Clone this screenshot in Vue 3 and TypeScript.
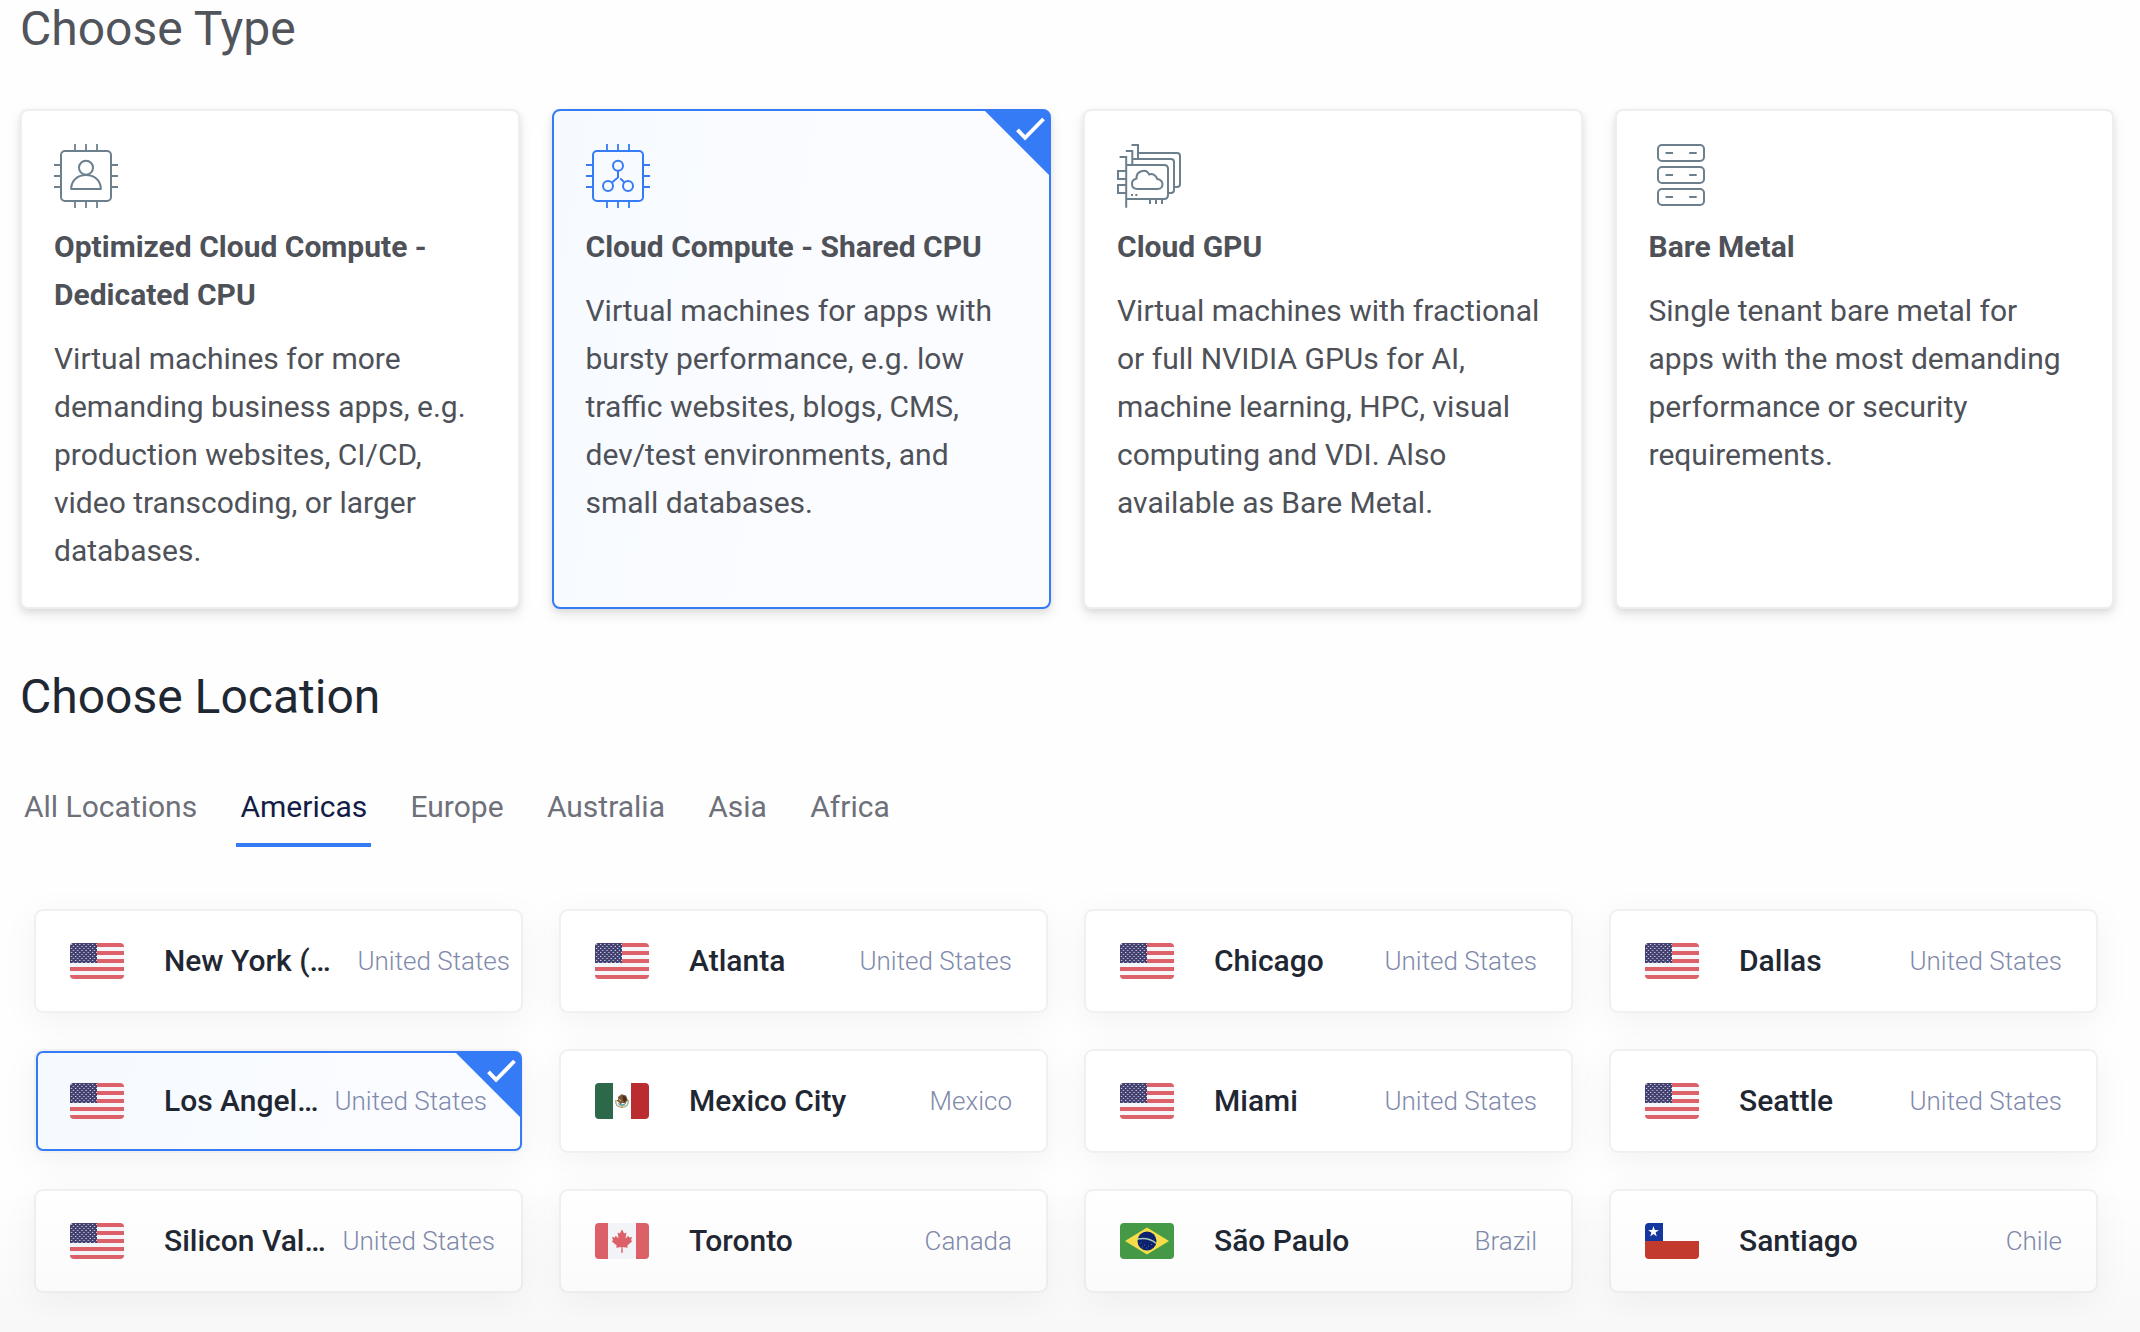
<script setup lang="ts">
import { ref } from 'vue'

interface ServerType {
  id: string
  title: string
  text: string
}

interface Place {
  name: string
  country: string
  flag: 'us' | 'mx' | 'ca' | 'br' | 'cl'
  shift?: number
}

const types: ServerType[] = [
  { id: 'dedicated', title: 'Optimized Cloud Compute - Dedicated CPU', text: 'Virtual machines for more demanding business apps, e.g. production websites, CI/CD, video transcoding, or larger databases.' },
  { id: 'shared', title: 'Cloud Compute - Shared CPU', text: 'Virtual machines for apps with bursty performance, e.g. low traffic websites, blogs, CMS, dev/test environments, and small databases.' },
  { id: 'gpu', title: 'Cloud GPU', text: 'Virtual machines with fractional or full NVIDIA GPUs for AI, machine learning, HPC, visual computing and VDI. Also available as Bare Metal.' },
  { id: 'metal', title: 'Bare Metal', text: 'Single tenant bare metal for apps with the most demanding performance or security requirements.' },
]

const tabs: string[] = ['All Locations', 'Americas', 'Europe', 'Australia', 'Asia', 'Africa']

const places: Place[] = [
  { name: 'New York (…', country: 'United States', flag: 'us', shift: 23 },
  { name: 'Atlanta', country: 'United States', flag: 'us' },
  { name: 'Chicago', country: 'United States', flag: 'us' },
  { name: 'Dallas', country: 'United States', flag: 'us' },
  { name: 'Los Angel…', country: 'United States', flag: 'us' },
  { name: 'Mexico City', country: 'Mexico', flag: 'mx' },
  { name: 'Miami', country: 'United States', flag: 'us' },
  { name: 'Seattle', country: 'United States', flag: 'us' },
  { name: 'Silicon Val…', country: 'United States', flag: 'us', shift: 8 },
  { name: 'Toronto', country: 'Canada', flag: 'ca' },
  { name: 'São Paulo', country: 'Brazil', flag: 'br' },
  { name: 'Santiago', country: 'Chile', flag: 'cl' },
]

const activeType = ref('shared')
const activeTab = ref('Americas')
const activePlace = ref('Los Angel…')
</script>

<template>
  <main class="page">
    <svg class="defs" width="0" height="0" aria-hidden="true">
      <defs>
        <pattern id="stars" width="4.2" height="4" patternUnits="userSpaceOnUse">
          <rect x="0.9" y="0.9" width="1.1" height="1.1" fill="#e4e4ee" />
          <rect x="3" y="2.9" width="1.1" height="1.1" fill="#e4e4ee" />
        </pattern>
      </defs>
    </svg>

    <h2 class="heading muted">Choose Type</h2>
    <section class="types">
      <article
        v-for="t in types"
        :key="t.id"
        class="type"
        :class="{ selected: t.id === activeType }"
        @click="activeType = t.id"
      >
        <svg class="icon" viewBox="0 0 64 64" fill="none" stroke="currentColor" stroke-width="2">
          <template v-if="t.id === 'dedicated' || t.id === 'shared'">
            <rect x="7" y="7" width="50" height="50" rx="4" />
            <path stroke-width="1.8" d="M21 0v6M32 0v6M43 0v6M21 58v6M32 58v6M43 58v6M0 21h6M0 32h6M0 43h6M58 21h6M58 32h6M58 43h6" />
          </template>
          <template v-if="t.id === 'dedicated'">
            <circle cx="32" cy="23.7" r="7" />
            <path stroke-linejoin="round" d="M17.2 45v-1.2C17.8 36 24 31 32 31s14.2 5 14.8 12.8V45z" />
          </template>
          <template v-else-if="t.id === 'shared'">
            <circle cx="32" cy="21.7" r="5" />
            <circle cx="22" cy="42" r="5" />
            <circle cx="42" cy="42" r="5" />
            <path d="M32 27v6.4l-6 5M34.3 34.4l4 3.8" />
          </template>
          <template v-else-if="t.id === 'gpu'">
            <path d="M14.5 1h6.5v13.5M21 9h39q3 0 3 3v28q0 3-3 3h-2.500M8.800 7h6.500v14M15.300 15H54q3 0 3 3v28q0 3-3 3h-2.200" />
            <path d="M2.600 13h6.600v50.700M9.200 21H47q4 0 4 4v26q0 4-4 4H9.200M9 27H1v8h8M9 41H1v8h8M33 55v5M39 55v5M45 55v5M14 51h2M18.300 51h2" />
            <path stroke-linejoin="round" d="M20.500 45C13.300 45 13.300 36 19.600 34.600C18.800 27 29 23.800 32.200 30.500C35.500 29.300 39.200 31 40.200 35C47.300 36.300 47 45 40.500 45Z" />
          </template>
          <template v-else>
            <rect v-for="y in [1, 23, 45]" :key="y" x="9" :y="y" width="46" height="16" rx="4" />
            <path d="M16.500 9h7.500M40.200 9h7.500M16.500 31h7.500M40.200 31h7.500M16.500 53h7.500M40.200 53h7.500" />
          </template>
        </svg>
        <h3>{{ t.title }}</h3>
        <p>{{ t.text }}</p>
        <svg v-if="t.id === activeType" class="corner" viewBox="0 0 66 66">
          <path d="M0 0H66V66z" fill="#367bf6" />
          <path d="M33.500 19.800l7.600 8L59.500 9" fill="none" stroke="#fff" stroke-width="3.900" />
        </svg>
      </article>
    </section>

    <h2 class="heading dark">Choose Location</h2>
    <nav class="tabs">
      <button
        v-for="tab in tabs"
        :key="tab"
        class="tab"
        :class="{ active: tab === activeTab }"
        @click="activeTab = tab"
      >{{ tab }}</button>
    </nav>

    <section class="places">
      <article
        v-for="p in places"
        :key="p.name"
        class="place"
        :class="{ selected: p.name === activePlace }"
        @click="activePlace = p.name"
      >
        <svg class="flag" viewBox="0 0 54 36">
          <template v-if="p.flag === 'us'">
            <rect width="54" height="36" fill="#f5f6fa" />
            <path d="M0 0h54v4H0zM0 8h54v4H0zM0 16h54v4H0zM0 24h54v4H0zM0 32h54v4H0z" fill="#dd6168" />
            <rect width="27" height="20" fill="#403e6e" />
            <rect width="27" height="20" fill="url(#stars)" />
          </template>
          <template v-else-if="p.flag === 'mx'">
            <rect width="54" height="36" fill="#fff" />
            <rect width="18" height="36" fill="#2c694a" />
            <rect x="36" width="18" height="36" fill="#bb2c30" />
            <path d="M20.800 17q-.8 7 6.200 7.400q7-.4 6.200-7.400" fill="none" stroke="#a9ab83" stroke-width="1.400" />
            <path d="M22.500 19.500q4.500 3 9 0l-2 3.200h-5z" fill="#5fa9b4" />
            <path d="M23 14l3.500-2.800 4.500 1.300 1.800 4.500-2.600 3.500-2.700-.8-2 1.500-2-2.200-2-1.500 1.800-1z" fill="#7b5637" />
            <path d="M27.500 12.500l3.500 1.500.5 3.500-2.500 1.500-1-2.500z" fill="#49311f" />
            <path d="M23.500 15.500l2.800 1.500-1 2.300zM26.300 22.300h1.500v2.400h-1.500z" fill="#c79a55" />
          </template>
          <template v-else-if="p.flag === 'ca'">
            <rect width="54" height="36" fill="#f5f6fa" />
            <path d="M0 0h13v36H0zM41 0h13v36H41z" fill="#dd6168" />
            <path d="M27 6.600l2.200 4 2.200-1-.9 6 2.800-2.800.8 1.700 2.900-.5-1 3.300 1.300 1-5 4.200.5 2.300-5.200-.7.200 5.600h-1.600l.2-5.600-5.200.7.500-2.300-5-4.200 1.300-1-1-3.300 2.900.5.800-1.700 2.800 2.800-.9-6 2.200 1z" fill="#dd6168" />
          </template>
          <template v-else-if="p.flag === 'br'">
            <rect width="54" height="36" fill="#469b47" />
            <path d="M5 18L27 4.500 49 18 27 31.500z" fill="#f9df4b" />
            <circle cx="27" cy="18" r="9.500" fill="#0c226f" />
            <path d="M17.700 16q11-2 18.300 4.300" fill="none" stroke="#a9cfbd" stroke-width="1.500" />
            <path d="M20.500 20h1M24 22h1M28 23h1M31 21.500h1M26 25h1M22 24h1" stroke="#6c7ba8" stroke-width=".8" />
          </template>
          <template v-else>
            <rect width="54" height="36" fill="#fff" />
            <rect width="18" height="18" fill="#1436a0" />
            <rect y="18" width="54" height="18" fill="#c43b2d" />
            <path d="M8.500 3l1.300 4h4.100l-3.300 2.500 1.200 4-3.300-2.400-3.300 2.400 1.200-4L3.100 7h4.100z" fill="#fff" />
          </template>
        </svg>
        <span class="name">{{ p.name }}</span>
        <span class="country" :style="{ marginRight: `${-(p.shift ?? 0)}px` }">{{ p.country }}</span>
        <svg v-if="p.name === activePlace" class="corner" viewBox="0 0 66 66">
          <path d="M0 0H66V66z" fill="#367bf6" />
          <path d="M33.500 19.800l7.600 8L59.500 9" fill="none" stroke="#fff" stroke-width="3.900" />
        </svg>
      </article>
    </section>
  </main>
</template>

<style>
body {
  background: #fefefe;
  overflow: hidden;
}
</style>

<style scoped>
.page {
  position: relative;
  box-sizing: border-box;
  width: 2140px;
  height: 1332px;
  overflow: hidden;
  background: #fefefe;
  font-family: Roboto, "Liberation Sans", sans-serif;
}
.page::after {
  content: "";
  position: absolute;
  left: 0;
  right: 0;
  bottom: 0;
  height: 150px;
  background: linear-gradient(rgba(0, 0, 0, 0), rgba(0, 0, 0, 0.022));
  pointer-events: none;
}
.defs {
  display: block;
}
.heading {
  margin: 0;
  padding-left: 20px;
  font-size: 48px;
  font-weight: 400;
  line-height: 58px;
}
.muted {
  color: #51545b;
}
.dark {
  margin-top: 59px;
  color: #1f2733;
}
.types {
  display: grid;
  grid-template-columns: repeat(4, 1fr);
  gap: 32px;
  width: 2094px;
  margin: 51px 0 0 20px;
}
.type {
  position: relative;
  box-sizing: border-box;
  height: 500px;
  padding: 33px 32px 0;
  border: 2px solid #eee;
  border-radius: 8px;
  background: #fff;
  box-shadow: 0 6px 14px rgba(0, 0, 0, 0.08), 0 3px 6px rgba(0, 0, 0, 0.08);
  color: #4e5158;
  font-size: 30px;
  line-height: 48px;
}
.type.selected {
  border-color: #367bf6;
  background: linear-gradient(100deg, #f6faff, #fbfcff 60%);
}
.type h3 {
  margin: 15px 0 16px;
  font-size: 30px;
  font-weight: 700;
}
.type p {
  margin: 0;
}
.icon {
  display: block;
  width: 64px;
  height: 64px;
  color: #6b7f8c;
}
.selected .icon {
  color: #367bf6;
}
.corner {
  position: absolute;
  top: -1px;
  right: -1px;
  width: 66px;
  height: 66px;
  border-top-right-radius: 7px;
}
.tabs {
  display: flex;
  gap: 35.300px;
  margin: 52px 0 0 20px;
}
.tab {
  padding: 5px 4px 12px;
  border: 0;
  border-bottom: 4px solid transparent;
  background: none;
  color: #6e717a;
  font: 400 30px/48px Roboto, "Liberation Sans", sans-serif;
}
.tab.active {
  border-bottom-color: #367bf6;
  color: #131d47;
}
.places {
  display: grid;
  grid-template-columns: repeat(4, 489px);
  gap: 36px;
  margin: 62px 0 0 34px;
}
.place {
  position: relative;
  display: flex;
  align-items: center;
  box-sizing: border-box;
  height: 104px;
  padding: 0 34px;
  border: 2px solid #f0f0f0;
  border-radius: 9px;
  background: #fff;
  box-shadow: 0 8px 36px rgba(0, 0, 0, 0.05);
}
.place.selected::before {
  content: "";
  position: absolute;
  inset: 0 -1px 0 0;
  border: 2px solid #367bf6;
  border-radius: 7px;
  background: linear-gradient(100deg, #f5faff, #fbfcff 80%);
}
.place .corner {
  top: 1px;
  right: 0;
}
.flag {
  position: relative;
  flex: none;
  width: 54px;
  height: 36px;
  border-radius: 4px;
}
.name {
  position: relative;
  margin-left: 40px;
  color: #1f2733;
  font-size: 30px;
  font-weight: 500;
  line-height: 48px;
  white-space: nowrap;
}
.country {
  position: relative;
  margin-left: auto;
  color: #7f8aac;
  font-size: 26px;
  font-weight: 300;
  line-height: 48px;
  white-space: nowrap;
}
</style>
